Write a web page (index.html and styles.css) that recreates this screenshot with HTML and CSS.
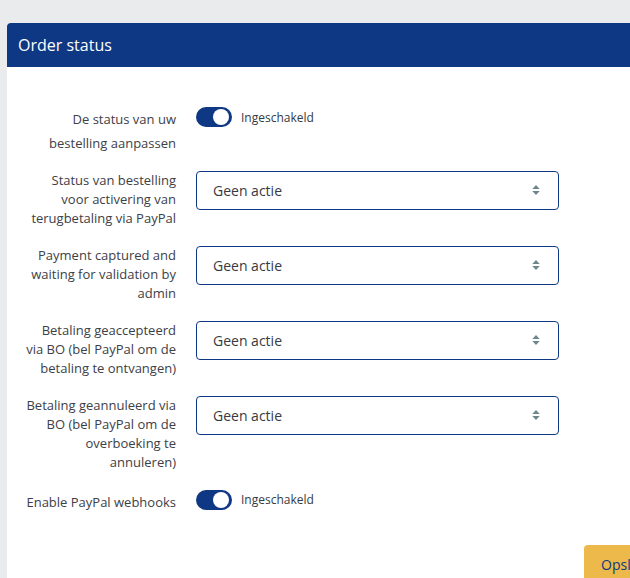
FILE: index.html
```html
<!DOCTYPE html>
<html lang="nl">
<head>
<meta charset="utf-8">
<title>Order status</title>
<link rel="stylesheet" href="styles.css">
</head>
<body>
<div class="page">
  <div class="card">
    <div class="card-header">Order status</div>
    <div class="card-body">
      <div class="form-row row-first">
        <div class="label label-tall">De status van uw bestelling aanpassen</div>
        <div class="control switch-control">
          <span class="switch"><span class="knob"></span></span>
          <span class="switch-text">Ingeschakeld</span>
        </div>
      </div>
      <div class="form-row">
        <div class="label">Status van bestelling voor activering van terugbetaling via PayPal</div>
        <div class="control">
          <div class="select"><span>Geen actie</span><svg class="arrows" width="8" height="12" viewBox="0 0 8 12"><path d="M0.3 5 L4 1 L7.7 5 Z M0.3 7 L7.7 7 L4 11 Z" fill="#6c868e"/></svg></div>
        </div>
      </div>
      <div class="form-row">
        <div class="label">Payment captured and waiting for validation by admin</div>
        <div class="control">
          <div class="select"><span>Geen actie</span><svg class="arrows" width="8" height="12" viewBox="0 0 8 12"><path d="M0.3 5 L4 1 L7.7 5 Z M0.3 7 L7.7 7 L4 11 Z" fill="#6c868e"/></svg></div>
        </div>
      </div>
      <div class="form-row">
        <div class="label">Betaling geaccepteerd via BO (bel PayPal om de betaling te ontvangen)</div>
        <div class="control">
          <div class="select"><span>Geen actie</span><svg class="arrows" width="8" height="12" viewBox="0 0 8 12"><path d="M0.3 5 L4 1 L7.7 5 Z M0.3 7 L7.7 7 L4 11 Z" fill="#6c868e"/></svg></div>
        </div>
      </div>
      <div class="form-row">
        <div class="label">Betaling geannuleerd via BO (bel PayPal om de overboeking te annuleren)</div>
        <div class="control">
          <div class="select"><span>Geen actie</span><svg class="arrows" width="8" height="12" viewBox="0 0 8 12"><path d="M0.3 5 L4 1 L7.7 5 Z M0.3 7 L7.7 7 L4 11 Z" fill="#6c868e"/></svg></div>
        </div>
      </div>
      <div class="form-row">
        <div class="label label-tall">Enable PayPal webhooks</div>
        <div class="control switch-control">
          <span class="switch"><span class="knob"></span></span>
          <span class="switch-text">Ingeschakeld</span>
        </div>
      </div>
    </div>
    <div class="card-footer">
      <button class="btn">Opslaan</button>
    </div>
  </div>
</div>
</body>
</html>
```

FILE: styles.css
```css
html, body {
  margin: 0;
  padding: 0;
  background: #eaebed;
  overflow: hidden;
  font-family: "Open Sans", "Liberation Sans", sans-serif;
}
.page {
  padding: 23px 0 0 7px;
}
.card {
  width: 720px;
  background: #ffffff;
  border-radius: 4px 0 0 0;
  overflow: hidden;
}
.card-header {
  background: #0e3883;
  color: #ffffff;
  height: 44px;
  box-sizing: border-box;
  padding: 10px 0 0 11px;
  font-size: 16px;
  line-height: 24px;
}
.card-body {
  padding-top: 40px;
  display: flex;
  flex-direction: column;
}
.form-row {
  display: flex;
  align-items: flex-start;
  margin-bottom: 18px;
}
.form-row.row-first {
  margin-bottom: 15.5px;
}
.form-row:last-child {
  margin-bottom: 0;
}
.label {
  width: 150px;
  margin-left: 19px;
  text-align: right;
  font-size: 13px;
  line-height: 19px;
  color: #3d4047;
}
.label-tall {
  line-height: 24px;
}
.control {
  margin-left: 20px;
}
.switch-control {
  display: flex;
  align-items: center;
  height: 20px;
}
.switch {
  position: relative;
  width: 36px;
  height: 20px;
  border-radius: 10px;
  background: #0e3883;
  display: inline-block;
}
.knob {
  position: absolute;
  top: 2px;
  right: 3px;
  width: 16px;
  height: 16px;
  border-radius: 50%;
  background: #ffffff;
}
.switch-text {
  margin-left: 9px;
  font-size: 12px;
  color: #363a41;
}
.select {
  width: 363px;
  height: 39px;
  box-sizing: border-box;
  border: 1px solid #0e3883;
  border-radius: 4px;
  display: flex;
  align-items: center;
  justify-content: space-between;
  padding: 0 18px 0 16px;
  font-size: 14px;
  color: #363a41;
}
.arrows {
  display: block;
}
.card-footer {
  padding: 31.5px 0 0 577px;
  height: 60px;
}
.btn {
  background: #edb94a;
  border: none;
  border-radius: 4px;
  color: #0e3883;
  font-family: "Open Sans", "Liberation Sans", sans-serif;
  font-size: 14px;
  line-height: 21px;
  padding: 9px 17px;
}
```
